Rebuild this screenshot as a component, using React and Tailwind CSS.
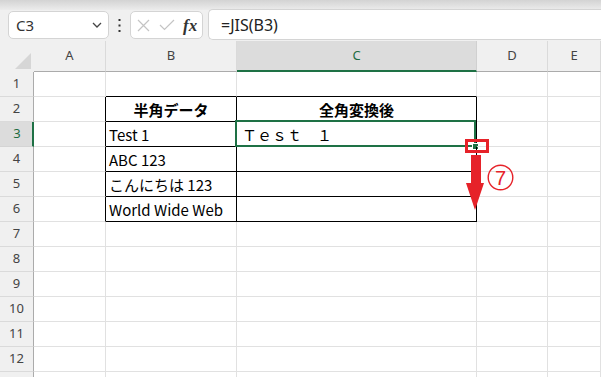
import React from 'react';

const rows = [1, 2, 3, 4, 5, 6, 7, 8, 9, 10, 11, 12, 13];
const cols = ['A', 'B', 'C', 'D', 'E'];

// 表のデータ (B列, C列)
const data = {
  2: ['半角データ', '全角変換後'],
  3: ['Test 1', 'Ｔｅｓｔ　１'],
  4: ['ABC 123', ''],
  5: ['こんにちは 123', ''],
  6: ['World Wide Web', ''],
};

function cellBorder(row, col) {
  const inTable = row >= 2 && row <= 6;
  if (inTable && (col === 'B' || col === 'C')) return 'border-r-black border-b-black';
  if (inTable && col === 'A') return 'border-r-black border-b-[#e1e1e1]';
  if (row === 1 && (col === 'B' || col === 'C')) return 'border-r-[#e1e1e1] border-b-black';
  return 'border-r-[#e1e1e1] border-b-[#e1e1e1]';
}

function FormulaBar() {
  return (
    <>
      <div className="h-[10px] bg-linear-to-b from-[#d3d3d3] to-[#ececec]" />
      <div className="h-[31px] bg-[#f0f0f0] flex pl-[8px]">
        <div className="mt-px w-[101px] h-[28px] bg-white border border-[#d4d4d4] rounded-[5px] flex items-center justify-between pl-[7px] pr-[6px]">
          <span className="text-[15px] text-[#333] font-['Noto_Sans',sans-serif]">C3</span>
          <svg width="10" height="6" viewBox="0 0 10 6">
            <path d="M1 1 L5 5 L9 1" fill="none" stroke="#444" strokeWidth="1.3" />
          </svg>
        </div>
        <div className="w-[21px] flex items-center justify-center">
          <svg width="3" height="13" viewBox="0 0 3 13">
            <rect x="0.5" y="0" width="2" height="2" fill="#333" />
            <rect x="0.5" y="5.5" width="2" height="2" fill="#333" />
            <rect x="0.5" y="11" width="2" height="2" fill="#333" />
          </svg>
        </div>
        <div className="mt-px w-[73px] h-[28px] bg-white border border-[#d4d4d4] rounded-[5px] flex items-center pl-[6px]">
          <svg width="13" height="13" viewBox="0 0 13 13">
            <path d="M1 1 L12 12 M12 1 L1 12" stroke="#c4c4c4" strokeWidth="1.2" />
          </svg>
          <svg className="ml-[9px]" width="16" height="12" viewBox="0 0 16 12">
            <path d="M1 6 L5.5 10.5 L15 1" fill="none" stroke="#c4c4c4" strokeWidth="1.2" />
          </svg>
          <span className="ml-[8px] text-[17px] italic font-bold text-[#333] font-['Liberation_Serif',serif] leading-none">fx</span>
        </div>
        <div className="ml-[5px] -mt-px flex-1 h-[31px] bg-white border border-r-0 border-[#d4d4d4] rounded-l-[5px] flex items-center pl-[12px]">
          <span className="text-[16px] text-[#222] font-['Noto_Sans',sans-serif]">=JIS(B3)</span>
        </div>
      </div>
    </>
  );
}

function App() {
  return (
    <div className="relative w-[601px] h-[377px] overflow-hidden bg-white">
      <FormulaBar />

      <div className="grid grid-cols-[34px_72px_131px_240px_71px_53px] grid-rows-[31px_repeat(13,25px)] font-['Noto_Sans',sans-serif]">
        {/* 左上のコーナー */}
        <div className="bg-[#f0f0f0] flex items-end justify-end pr-[3px] pb-[3px]">
          <svg width="16" height="16" viewBox="0 0 16 16">
            <polygon points="16,0 16,16 0,16" fill="#d6d6d6" />
          </svg>
        </div>
        {cols.map((c) =>
          c === 'C' ? (
            <div key={c} className="bg-[#dcdcdc] border-r border-r-[#d0d0d0] border-b-2 border-b-[#1e7145] flex items-center justify-center text-[13px] text-[#1e6c41]">
              {c}
            </div>
          ) : (
            <div key={c} className="bg-[#f0f0f0] border-r border-r-[#dadada] border-b border-b-[#ababab] flex items-center justify-center text-[13px] text-[#444]">
              {c}
            </div>
          )
        )}

        {rows.map((r) => (
          <React.Fragment key={r}>
            {r === 3 ? (
              <div className="bg-[#dcdcdc] border-r-2 border-r-[#1e7145] border-b border-b-[#d4d4d4] flex items-center justify-center pl-[2px] text-[13px] text-[#1e6c41]">
                {r}
              </div>
            ) : (
              <div className="bg-[#f0f0f0] border-r border-r-[#ababab] border-b border-b-[#dadada] flex items-center justify-center text-[13px] text-[#444]">
                {r < 13 ? r : ''}
              </div>
            )}
            {cols.map((c) => {
              const d = data[r];
              let text = '';
              if (d && c === 'B') text = d[0];
              if (d && c === 'C') text = d[1];
              const header = r === 2;
              return (
                <div
                  key={c}
                  className={`relative border-r border-b ${cellBorder(r, c)} flex items-center ${header ? 'justify-center font-bold' : 'pl-[3px]'} text-[15px] text-black leading-none font-['Noto_Sans_CJK_JP',sans-serif] whitespace-nowrap`}
                >
                  {r === 3 && c === 'C' ? <span className="pl-[2px]">{text}</span> : text}
                  {r === 3 && c === 'C' && (
                    <>
                      <div className="absolute -left-[2px] -top-[2px] right-0 -bottom-[1px] border-2 border-[#1e7145]" />
                      <div className="absolute -right-[3px] -bottom-[4px] w-[7px] h-[7px] bg-[#1e7145] border border-white" />
                    </>
                  )}
                </div>
              );
            })}
          </React.Fragment>
        ))}
      </div>

      {/* 注釈: フィルハンドルの赤枠と矢印 */}
      <div className="absolute left-[465px] top-[139px] w-[24px] h-[14px] border-[3px] border-[#e62229]" />
      <svg className="absolute left-[465px] top-[155px]" width="20" height="56" viewBox="0 0 20 56">
        <rect x="6" y="0" width="10" height="29" fill="#e62229" />
        <polygon points="1,28 19,28 10,55" fill="#e62229" />
      </svg>
      <div className="absolute left-[487px] top-[164px] w-[27px] h-[27px] flex items-center justify-center">
        <svg className="absolute inset-0" width="27" height="27" viewBox="0 0 27 27">
          <circle cx="13.5" cy="13.5" r="12.3" fill="none" stroke="#e62229" strokeWidth="1.4" />
        </svg>
        <span className="relative text-[20px] text-[#e62229] leading-none font-['Liberation_Sans',sans-serif]">7</span>
      </div>
    </div>
  );
}

export default App;
